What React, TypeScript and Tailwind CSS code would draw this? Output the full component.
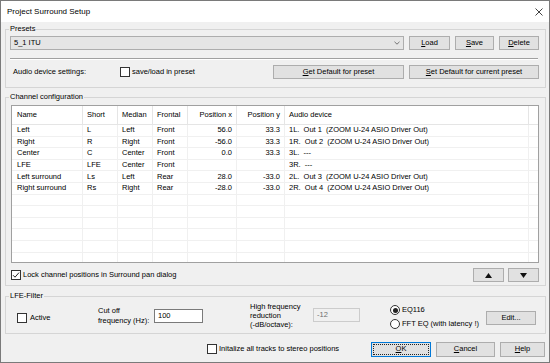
import type { ReactNode } from 'react';

const rows = [
  ['Left', 'L', 'Left', 'Front', '56.0', '33.3', '1L.  Out 1  (ZOOM U-24 ASIO Driver Out)'],
  ['Right', 'R', 'Right', 'Front', '-56.0', '33.3', '1R.  Out 2  (ZOOM U-24 ASIO Driver Out)'],
  ['Center', 'C', 'Center', 'Front', '0.0', '33.3', '3L.  ---'],
  ['LFE', 'LFE', 'Center', 'Front', '', '', '3R.  ---'],
  ['Left surround', 'Ls', 'Left', 'Rear', '28.0', '-33.0', '2L.  Out 3  (ZOOM U-24 ASIO Driver Out)'],
  ['Right surround', 'Rs', 'Right', 'Rear', '-28.0', '-33.0', '2R.  Out 4  (ZOOM U-24 ASIO Driver Out)'],
];

const cols = 'grid grid-cols-[71px_35px_35px_35px_49px_48px_244px_1fr]';

function Btn({ children, className = '' }: { children: ReactNode; className?: string }) {
  return (
    <div className={`h-[14px] shrink-0 border border-[#adadad] bg-[#e1e1e1] flex items-center justify-center ${className}`}>
      {children}
    </div>
  );
}

function Check({ checked = false }: { checked?: boolean }) {
  return (
    <span className="w-[10px] h-[10px] shrink-0 border border-[#333] bg-white flex items-center justify-center">
      {checked && (
        <svg viewBox="0 0 8 8" className="w-[8px] h-[8px]">
          <path d="M1 4.2 L3 6.2 L7 1.6" stroke="#222" fill="none" strokeWidth="1" />
        </svg>
      )}
    </span>
  );
}

function Radio({ checked = false }: { checked?: boolean }) {
  return (
    <span className="w-[10px] h-[10px] shrink-0 rounded-full border border-[#333] bg-white flex items-center justify-center">
      {checked && <span className="w-[5px] h-[5px] rounded-full bg-[#222]" />}
    </span>
  );
}

function Cell({ children, right = false, first = false }: { children?: ReactNode; right?: boolean; first?: boolean }) {
  return (
    <div
      className={`border-r border-b border-[#f0f0f0] flex items-center whitespace-pre overflow-hidden ${
        right ? 'justify-end pr-[4px]' : first ? 'pl-[5px]' : 'pl-[4px]'
      }`}
    >
      {children}
    </div>
  );
}

export default function App() {
  const empty = Array.from({ length: 6 });
  return (
    <div className="w-[550px] h-[363px] border border-[#7a7a7a] bg-[#f0f0f0] flex flex-col text-[7.5px] leading-[10px] text-black font-['Liberation_Sans',Arial,sans-serif]">
      <div className="h-[21px] shrink-0 bg-white flex items-center justify-between pl-[6px] pr-[6px] text-[8px]">
        <span>Project Surround Setup</span>
        <svg viewBox="0 0 8 8" className="w-[8px] h-[8px]">
          <path d="M0.5 0.5 L7.5 7.5 M7.5 0.5 L0.5 7.5" stroke="#111" strokeWidth="0.8" />
        </svg>
      </div>

      <div className="flex-1 flex flex-col pl-[4px] pr-[3px]">
        <fieldset className="mt-[2px] border border-[#d5d5d5] pt-[2px] pb-[8px]">
          <legend className="ml-[3px] px-[1px]">Presets</legend>
          <div className="flex items-center pl-[4px]">
            <div className="w-[394px] h-[14px] border border-[#adadad] bg-[#e5e5e5] flex items-center justify-between pl-[3px] pr-[3px]">
              <span>5_1 ITU</span>
              <svg viewBox="0 0 6 4" className="w-[6px] h-[4px]">
                <path d="M0.5 0.8 L3 3.2 L5.5 0.8" stroke="#555" fill="none" strokeWidth="0.8" />
              </svg>
            </div>
            <Btn className="ml-[5px] w-[41px]">
              <span className="underline">L</span>oad
            </Btn>
            <Btn className="ml-[5px] w-[39px]">
              <span className="underline">S</span>ave
            </Btn>
            <Btn className="ml-[5px] w-[40px]">
              <span className="underline">D</span>elete
            </Btn>
          </div>
          <div className="mt-[8px] ml-[4px] w-[528px] border-t border-[#a0a0a0] border-b border-b-white" />
          <div className="mt-[5px] h-[14px] flex items-center pl-[7px] pr-[6px]">
            <span className="w-[107px]">Audio device settings:</span>
            <Check />
            <span className="ml-[2px]">save/load in preset</span>
            <Btn className="ml-auto w-[131px]">
              <span>
                <span className="underline">G</span>et Default for preset
              </span>
            </Btn>
            <Btn className="ml-[5px] w-[130px]">
              <span>
                <span className="underline">S</span>et Default for current preset
              </span>
            </Btn>
          </div>
        </fieldset>

        <fieldset className="mt-[4px] border border-[#d5d5d5] pt-[3px] pb-[3px]">
          <legend className="ml-[3px] px-[1px]">Channel configuration</legend>
          <div className="ml-[5px] w-[528px] h-[158px] border border-[#a0a0a0] bg-white overflow-hidden">
            <div className={`${cols} h-[19px]`}>
              {['Name', 'Short', 'Median', 'Frontal'].map((h, i) => (
                <div key={h} className={`border-r border-b border-[#e5e5e5] flex items-center ${i === 0 ? 'pl-[5px]' : 'pl-[4px]'}`}>
                  {h}
                </div>
              ))}
              <div className="border-r border-b border-[#e5e5e5] flex items-center justify-end pr-[4px]">Position x</div>
              <div className="border-r border-b border-[#e5e5e5] flex items-center justify-end pr-[4px]">Position y</div>
              <div className="border-r border-b border-[#e5e5e5] flex items-center pl-[4px]">Audio device</div>
              <div className="border-b border-[#e5e5e5]" />
            </div>
            {rows.map((r) => (
              <div key={r[0]} className={`${cols} h-[11.6px]`}>
                <Cell first>{r[0]}</Cell>
                <Cell>{r[1]}</Cell>
                <Cell>{r[2]}</Cell>
                <Cell>{r[3]}</Cell>
                <Cell right>{r[4]}</Cell>
                <Cell right>{r[5]}</Cell>
                <Cell>{r[6]}</Cell>
                <div className="border-b border-[#f0f0f0]" />
              </div>
            ))}
            {empty.map((_, i) => (
              <div key={i} className={`${cols} h-[11.6px]`}>
                <Cell />
                <Cell />
                <Cell />
                <Cell />
                <Cell />
                <Cell />
                <Cell />
                <div className="border-b border-[#f0f0f0]" />
              </div>
            ))}
          </div>
          <div className="mt-[5px] h-[14px] flex items-center pl-[5px] pr-[6px]">
            <Check checked />
            <span className="ml-[2px]">Lock channel positions in Surround pan dialog</span>
            <Btn className="ml-auto w-[31px]">
              <svg viewBox="0 0 7 5" className="w-[7px] h-[5px]">
                <path d="M3.5 0 L7 5 L0 5 Z" fill="#111" />
              </svg>
            </Btn>
            <Btn className="ml-[4px] w-[31px]">
              <svg viewBox="0 0 7 5" className="w-[7px] h-[5px]">
                <path d="M0 0 L7 0 L3.5 5 Z" fill="#111" />
              </svg>
            </Btn>
          </div>
        </fieldset>

        <fieldset className="mt-[5px] border border-[#d5d5d5]">
          <legend className="ml-[3px] px-[1px]">LFE-Filter</legend>
          <div className="h-[32px] flex items-start">
            <div className="w-[92px] mt-[12px] pl-[11px] flex items-center">
              <Check />
              <span className="ml-[3px]">Active</span>
            </div>
            <div className="w-[56px] mt-[5px]">
              Cut off
              <br />
              frequency (Hz):
            </div>
            <div className="mt-[8px] w-[49px] h-[14px] border border-[#7a7a7a] bg-white flex items-center pl-[3px]">100</div>
            <div className="ml-[47px] w-[63px] mt-[1px] leading-[9px]">
              High frequency
              <br />
              reduction
              <br />
              (-dB/octave):
            </div>
            <div className="mt-[7px] w-[47px] h-[14px] border border-[#cccccc] bg-[#f0f0f0] text-[#6d6d6d] flex items-center pl-[3px]">
              -12
            </div>
            <div className="ml-[30px] w-[96px] mt-[2px]">
              <div className="h-[14px] flex items-center">
                <Radio checked />
                <span className="ml-[2px]">EQ116</span>
              </div>
              <div className="h-[14px] flex items-center">
                <Radio />
                <span className="ml-[2px]">FFT EQ (with latency !)</span>
              </div>
            </div>
            <Btn className="mt-[10px] w-[50px]">Edit...</Btn>
          </div>
        </fieldset>

        <div className="mt-[8px] h-[14px] flex items-center pr-[1px]">
          <div className="ml-[202px]">
            <Check />
          </div>
          <span className="ml-[2px]">Initalize all tracks to stereo positions</span>
          <div className="ml-auto w-[60px] h-[15px] border border-[#0078d7] bg-[#e1e1e1] p-[1px] flex">
            <div className="flex-1 outline outline-1 outline-dotted outline-[#222] -outline-offset-1 flex items-center justify-center">
              <span>
                <span className="underline">O</span>K
              </span>
            </div>
          </div>
          <Btn className="ml-[5px] w-[59px] h-[15px]">
            <span>
              <span className="underline">C</span>ancel
            </span>
          </Btn>
          <Btn className="ml-[5px] w-[45px] h-[15px]">
            <span>
              <span className="underline">H</span>elp
            </span>
          </Btn>
        </div>
      </div>
    </div>
  );
}
